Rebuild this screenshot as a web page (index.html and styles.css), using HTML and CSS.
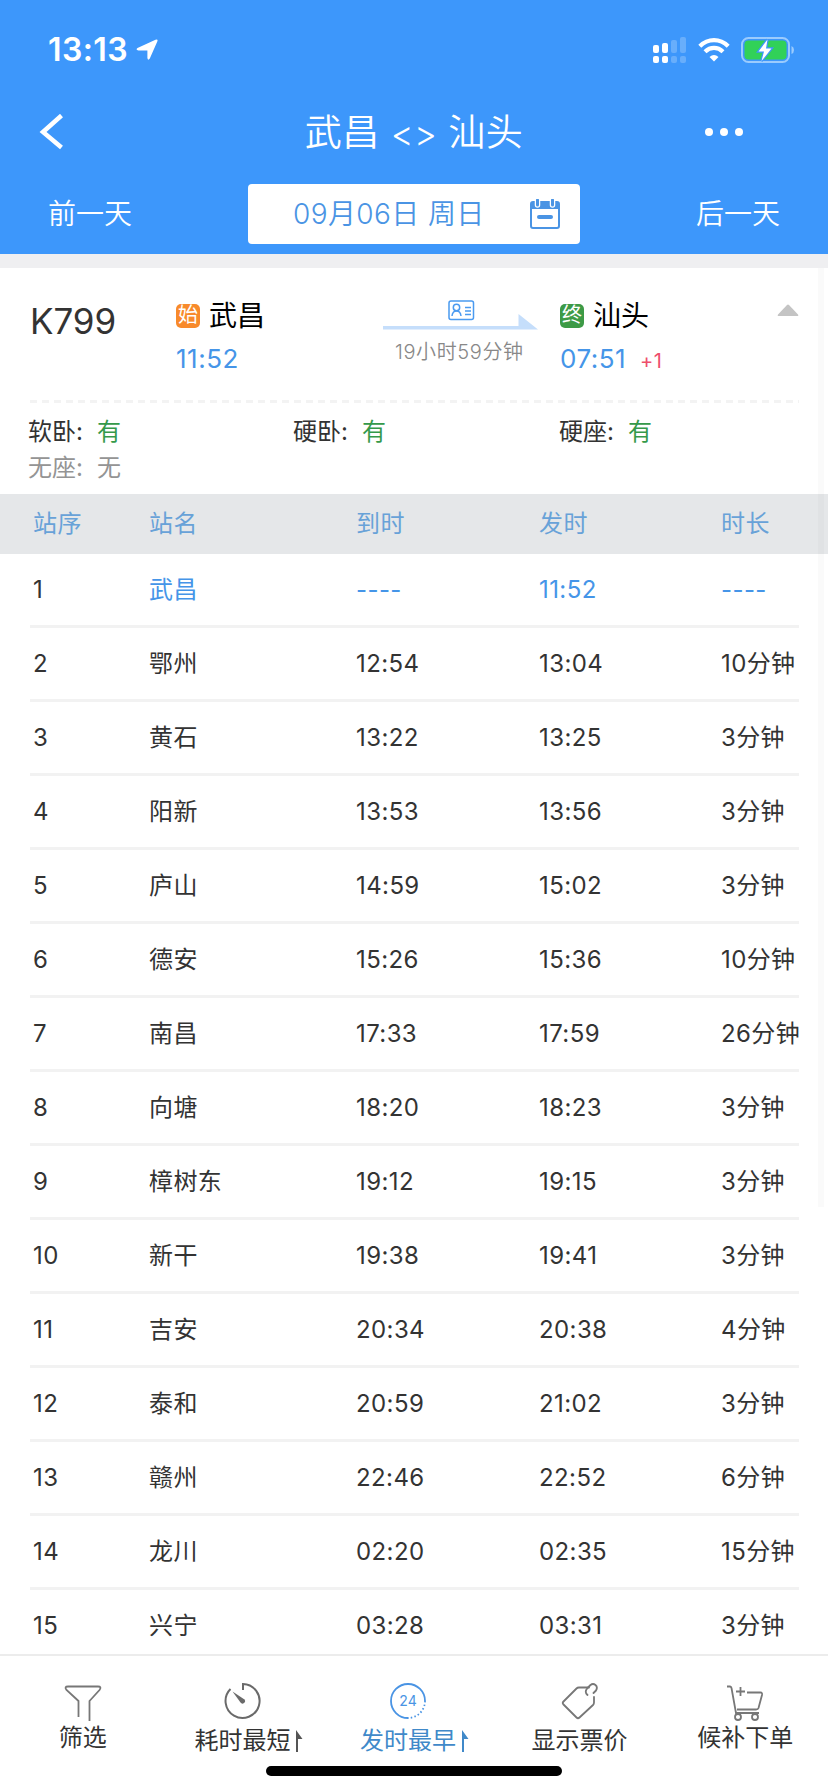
FILE: index.html
```html
<!DOCTYPE html>
<html lang="zh-CN">
<head>
  <meta charset="UTF-8">
  <title>武昌 - 汕头</title>
  <link rel="stylesheet" href="styles.css">
</head>
<body>
  <div id="app">
    <header class="header">
      <div class="status-bar">
        <span class="clock">13:13</span>
        <svg class="location" width="22" height="22" viewBox="0 0 22 22"><path d="M1.500 9 19.500 .8Q22.300 -.3 21.300 2.500L13.800 19.500Q12 22 11.400 19V11.500H2.500Q-.8 10.600 1.500 9Z" fill="#fff"/></svg>
        <div class="status-icons">
          <svg width="34" height="26" viewBox="0 0 34 26" fill="#fff">
            <rect x="0" y="8" width="6" height="8" rx="2"/>
            <rect x="9" y="6" width="6" height="10" rx="2"/>
            <rect x="0" y="19" width="6" height="7" rx="2"/>
            <rect x="9" y="19" width="6" height="7" rx="2"/>
            <g opacity=".22">
              <rect x="18" y="3" width="6" height="13" rx="2"/>
              <rect x="27" y="0" width="6" height="16" rx="2"/>
              <rect x="18" y="19" width="6" height="7" rx="2"/>
              <rect x="27" y="19" width="6" height="7" rx="2"/>
            </g>
          </svg>
          <svg class="wifi" width="32" height="24" viewBox="0 0 32 24">
            <g fill="none" stroke="#fff" stroke-width="4.200">
              <path d="M1.800 8.200Q8 2.100 16 2.100T30.200 8.200"/>
              <path d="M7 13.700Q11 9.800 16 9.800T25 13.700"/>
            </g>
            <path d="M16 23.500 11.500 19Q16 15.200 20.500 19Z" fill="#fff"/>
          </svg>
          <svg class="battery" width="54" height="26" viewBox="0 0 54 26">
            <rect x="1" y="1" width="47" height="24" rx="6.500" fill="none" stroke="#9bcbfd" stroke-width="2"/>
            <path d="M50.500 9v8q2.500-1 2.500-4t-2.500-4Z" fill="#9bcbfd"/>
            <rect x="3.500" y="3.500" width="42" height="19" rx="4" fill="#31d158"/>
            <path d="M26.500 2.500 17.500 14.500H23L20.500 24 30.500 11.500H25Z" fill="#fff" stroke="#3d97fb" stroke-width="2.500" paint-order="stroke"/>
          </svg>
        </div>
      </div>
      <div class="nav-bar">
        <svg class="back" width="24" height="36" viewBox="0 0 24 36"><path d="M22.500 1.500 4 18 22.500 33.500" fill="none" stroke="#fff" stroke-width="4.500"/></svg>
        <h1>武昌 <span>&lt;&gt;</span> 汕头</h1>
        <div class="more"><i></i><i></i><i></i></div>
      </div>
      <div class="date-bar">
        <span>前一天</span>
        <div class="date-picker">
          <span>09月06日 周日</span>
          <svg width="30" height="30" viewBox="0 0 30 30">
            <rect x="1" y="3" width="28" height="26" rx="2" fill="none" stroke="#4a94e4" stroke-width="2"/>
            <path d="M1 3h28v7H1Z" fill="#4a94e4"/>
            <path d="M7.500 1v5M22.500 1v5" stroke="#fff" stroke-width="5.500" stroke-linecap="round"/>
            <path d="M7.500 1v5M22.500 1v5" stroke="#4a94e4" stroke-width="3" stroke-linecap="round"/>
            <path d="M9 18h12" stroke="#4a94e4" stroke-width="4" stroke-linecap="round"/>
          </svg>
        </div>
        <span>后一天</span>
      </div>
    </header>

    <main>
      <section class="train">
        <div class="train-info">
          <div class="train-no">K799</div>
          <div class="station">
            <div class="station-name"><span class="badge start">始</span>武昌</div>
            <div class="station-time">11:52</div>
          </div>
          <div class="duration">
            <svg width="156" height="32" viewBox="0 0 156 32">
              <path d="M0 26H135.500V14L155 29.500H0Z" fill="#c5defb"/>
              <g fill="none" stroke="#4a9af0" stroke-width="1.500">
                <rect x="66" y="1" width="24.500" height="18.500" rx="2"/>
                <circle cx="73.500" cy="7.500" r="3.200"/>
                <path d="M69 16q.5-5 4.500-5t4.500 5M82 7.500h6M82 11h6M82 14.500h6"/>
              </g>
            </svg>
            <div class="duration-text">19小时59分钟</div>
          </div>
          <div class="station">
            <div class="station-name"><span class="badge end">终</span>汕头</div>
            <div class="station-time">07:51<small>+1</small></div>
          </div>
          <svg class="collapse" width="22" height="12" viewBox="0 0 22 12"><path d="M1 10.500 10 1q1-1 2 0l9 9.500q1 1.500-1 1.500H2q-2 0-1-1.500Z" fill="#c4c4c4"/></svg>
        </div>
        <div class="dashes"></div>
        <div class="seats">
          <div class="seat">软卧:<b>有</b></div>
          <div class="seat">硬卧:<b>有</b></div>
          <div class="seat">硬座:<b>有</b></div>
          <div class="seat none">无座:<b>无</b></div>
        </div>
      </section>

      <section class="stops">
        <div class="stop head"><span>站序</span><span>站名</span><span>到时</span><span>发时</span><span>时长</span></div>
        <div class="stop current"><span>1</span><span>武昌</span><span>----</span><span>11:52</span><span>----</span></div>
        <div class="stop"><span>2</span><span>鄂州</span><span>12:54</span><span>13:04</span><span>10分钟</span></div>
        <div class="stop"><span>3</span><span>黄石</span><span>13:22</span><span>13:25</span><span>3分钟</span></div>
        <div class="stop"><span>4</span><span>阳新</span><span>13:53</span><span>13:56</span><span>3分钟</span></div>
        <div class="stop"><span>5</span><span>庐山</span><span>14:59</span><span>15:02</span><span>3分钟</span></div>
        <div class="stop"><span>6</span><span>德安</span><span>15:26</span><span>15:36</span><span>10分钟</span></div>
        <div class="stop"><span>7</span><span>南昌</span><span>17:33</span><span>17:59</span><span>26分钟</span></div>
        <div class="stop"><span>8</span><span>向塘</span><span>18:20</span><span>18:23</span><span>3分钟</span></div>
        <div class="stop"><span>9</span><span>樟树东</span><span>19:12</span><span>19:15</span><span>3分钟</span></div>
        <div class="stop"><span>10</span><span>新干</span><span>19:38</span><span>19:41</span><span>3分钟</span></div>
        <div class="stop"><span>11</span><span>吉安</span><span>20:34</span><span>20:38</span><span>4分钟</span></div>
        <div class="stop"><span>12</span><span>泰和</span><span>20:59</span><span>21:02</span><span>3分钟</span></div>
        <div class="stop"><span>13</span><span>赣州</span><span>22:46</span><span>22:52</span><span>6分钟</span></div>
        <div class="stop"><span>14</span><span>龙川</span><span>02:20</span><span>02:35</span><span>15分钟</span></div>
        <div class="stop"><span>15</span><span>兴宁</span><span>03:28</span><span>03:31</span><span>3分钟</span></div>
      </section>
      <div class="scrollbar"></div>
    </main>

    <footer class="tab-bar">
      <div class="tab">
        <svg width="38" height="38" viewBox="0 0 38 38" fill="none" stroke="#777" stroke-width="1.800">
          <path d="M14.500 33V17L2.500 6Q0 2.500 4 2.500H34Q38 2.500 35.500 6L25.500 17V37" />
        </svg>
        <div class="tab-text">筛选</div>
      </div>
      <div class="tab sort">
        <svg width="38" height="38" viewBox="0 0 38 38">
          <path d="M20 8V2A17 17 0 1 1 7.500 7" fill="none" stroke="#6a6a6a" stroke-width="2"/>
          <path d="M9.500 9.500 21.500 17.500A2.300 2.300 0 1 1 17.500 20.500Z" fill="#6a6a6a"/>
        </svg>
        <div class="tab-text">耗时最短<svg class="up" width="8" height="22" viewBox="0 0 8 22"><path d="M1 0 7.500 9H3V22H1Z" fill="#555"/></svg></div>
      </div>
      <div class="tab sort active">
        <svg width="38" height="38" viewBox="0 0 38 38" fill="none" stroke="#4a94e4">
          <path d="M19 36A17 17 0 1 1 36 19" stroke-width="1.800"/>
          <path d="M36 19A17 17 0 0 1 19 36" stroke-width="1.800" stroke-dasharray="1.500 2.200"/>
          <text x="19" y="24" text-anchor="middle" class="clock24">24</text>
        </svg>
        <div class="tab-text">发时最早<svg class="up" width="8" height="22" viewBox="0 0 8 22"><path d="M1 0 7.500 9H3V22H1Z" fill="#4089c9"/></svg></div>
      </div>
      <div class="tab price">
        <svg width="38" height="38" viewBox="0 0 38 38" fill="none" stroke="#777" stroke-width="1.800" stroke-linejoin="round" stroke-linecap="round">
          <path d="M28 5.500H18Q16.500 5.500 15.500 6.500L2.500 19.500Q1 21 2.500 22.500L15.500 35.500Q17 37 18.500 35.500L32 23Q33 22 33 20.500V15"/>
          <path d="M26.500 13Q23 10 26.500 6L29.500 3Q32 1 34.500 3T35 8.500L32.500 11"/>
        </svg>
        <div class="tab-text">显示票价</div>
      </div>
      <div class="tab">
        <svg width="38" height="38" viewBox="0 0 38 38" fill="none" stroke="#777" stroke-width="1.800">
          <path d="M1 2.500H4Q5 2.500 5.500 4L10 29H33M11 25.500H30Q32 25.500 32.500 24L36 11Q36.500 8.500 34.500 8.500H21"/>
          <path d="M14.500 3V12M10 7.500H19"/>
          <circle cx="12" cy="33" r="3"/>
          <circle cx="29" cy="33" r="3"/>
        </svg>
        <div class="tab-text">候补下单</div>
      </div>
      <div class="home-indicator"></div>
    </footer>
  </div>
</body>
</html>
```
FILE: styles.css
```css
* {
  box-sizing: border-box;
}
body {
  margin: 0;
  font-family: Inter, 'Noto Sans CJK SC', sans-serif;
  font-size: 24px;
  font-weight: 400;
  color: #333;
  background: #fff;
}
svg {
  display: block;
  flex-shrink: 0;
}
#app {
  width: 828px;
  height: 1792px;
  display: flex;
  flex-direction: column;
  overflow: hidden;
}

/* Header */
.header {
  height: 254px;
  flex-shrink: 0;
  background: #3d97fb;
  color: #fff;
}
.status-bar {
  height: 100px;
  padding: 0 33px 0 48px;
  display: flex;
  align-items: center;
}
.clock {
  font-size: 32px;
  font-weight: 600;
  line-height: 40px;
  letter-spacing: .4px;
}
.location {
  margin-left: 8px;
}
.status-icons {
  display: flex;
  align-items: center;
  margin-left: auto;
}
.wifi {
  margin-left: 11px;
}
.battery {
  margin-left: 11px;
}
.nav-bar {
  height: 64px;
  display: grid;
  grid-template-columns: 228px 1fr 228px;
  align-items: center;
}
.back {
  margin-left: 39px;
}
h1 {
  margin: 0;
  padding-top: 2px;
  font-size: 37px;
  font-weight: 350;
  line-height: 50px;
  text-align: center;
  letter-spacing: .5px;
  white-space: nowrap;
}
h1 span {
  font-size: 35px;
}
.more {
  display: flex;
  gap: 7px;
  margin-left: 105px;
}
.more i {
  width: 8px;
  height: 8px;
  border-radius: 50%;
  background: #fff;
}
.date-bar {
  margin-top: 20px;
  padding: 0 48px;
  display: flex;
  align-items: center;
  justify-content: space-between;
  font-size: 28px;
  font-weight: 350;
  line-height: 40px;
}
.date-picker {
  width: 332px;
  height: 60px;
  padding: 0 20px 0 45px;
  display: flex;
  align-items: center;
  justify-content: space-between;
  border-radius: 4px;
  background: #fff;
  color: #4a94e4;
  letter-spacing: .4px;
}

/* Train summary */
main {
  position: relative;
  flex: 1;
  min-height: 0;
  overflow: hidden;
  border-top: 14px solid #efeff1;
}
.train {
  height: 226px;
}
.train-info {
  height: 132px;
  padding: 30px 29px 0 30px;
  display: grid;
  grid-template-columns: 146px 207px 177px 217px 22px;
  align-items: start;
}
.train-no {
  font-size: 35px;
  line-height: 46px;
  letter-spacing: -.1px;
}
.station-name {
  display: flex;
  align-items: center;
  height: 36px;
  font-size: 28px;
  line-height: 36px;
  color: #000;
}
.badge {
  width: 24px;
  height: 24px;
  margin-right: 9px;
  border-radius: 5px;
  font-size: 20px;
  line-height: 23px;
  text-align: center;
  color: #fff;
}
.start {
  background: #f88a2b;
}
.end {
  background: #3d9a46;
}
.station-time {
  margin-top: 5px;
  font-size: 26px;
  line-height: 40px;
  letter-spacing: .5px;
  color: #4595e8;
}
.station-time small {
  margin-left: 14px;
  font-size: 20px;
  color: #ee4f6c;
}
.duration {
  width: 156px;
  padding-top: 2px;
}
.duration-text {
  margin: 6px 0 0 12px;
  font-size: 20px;
  font-weight: 350;
  line-height: 28px;
  letter-spacing: .6px;
  color: #888;
  white-space: nowrap;
}
.collapse {
  margin-top: 6px;
}
.dashes {
  height: 3px;
  margin: 0 29px 0 30px;
  background: repeating-linear-gradient(90deg, #f3f3f3 0 7px, #fff 7px 12px);
}
.seats {
  display: grid;
  grid-template-columns: 265px 266px 1fr;
  grid-auto-rows: 36px;
  padding: 11px 29px 0 28px;
  line-height: 36px;
}
.seat b {
  margin-left: 14px;
  font-weight: 400;
  color: #35994a;
}
.none, .none b {
  color: #949494;
}

/* Timetable */
.stop {
  height: 74px;
  margin: 0 29px 0 30px;
  padding-left: 3px;
  display: grid;
  grid-template-columns: 116px 207px 183px 182px 1fr;
  align-items: center;
  border-bottom: 3px solid #f2f2f2;
  line-height: 36px;
  letter-spacing: .4px;
  white-space: nowrap;
}
.head {
  height: 60px;
  margin: 0;
  padding: 0 0 0 33px;
  border: 0;
  background: #e5e7e9;
  color: #68a2d8;
}
.current {
  color: #4595e8;
}
.current span:first-child {
  color: #333;
}
.scrollbar {
  position: absolute;
  top: 0;
  right: 4px;
  width: 6px;
  height: 939px;
  background: rgba(0, 0, 0, .02);
}

/* Bottom tabs */
.tab-bar {
  position: relative;
  height: 138px;
  flex-shrink: 0;
  display: grid;
  grid-template-columns: repeat(5, 1fr);
  border-top: 2px solid #ececec;
  background: #fff;
}
.tab {
  display: flex;
  flex-direction: column;
  align-items: center;
  padding-top: 28px;
}
.sort, .price {
  padding-top: 26px;
}
.sort {
  padding-right: 12px;
}
.tab-text {
  position: relative;
  padding-top: 1px;
  line-height: 30px;
}
.sort .tab-text, .price .tab-text {
  padding-top: 6px;
}
.up {
  position: absolute;
  left: 101px;
  top: 10px;
}
.active {
  color: #4089c9;
}
.clock24 {
  font-size: 14px;
  fill: #4a94e4;
  stroke: none;
}
.home-indicator {
  position: absolute;
  bottom: 16px;
  left: 266px;
  width: 296px;
  height: 10px;
  border-radius: 5px;
  background: #000;
}
```
